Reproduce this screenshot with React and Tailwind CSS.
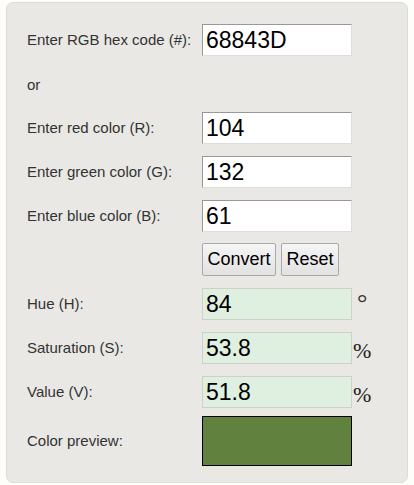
import React from 'react';

const font = { fontFamily: '"Liberation Sans", Arial, sans-serif' };

function Label({ children }) {
  return <div className="w-[175px] shrink-0 text-[15px] text-[#333]">{children}</div>;
}

function EntryRow({ label, value, className = '' }) {
  return (
    <div className={`flex items-center ${className}`}>
      <Label>{label}</Label>
      <div className="h-[32px] w-[150px] border border-t-[#999] border-l-[#999] border-r-[#ddd] border-b-[#ddd] bg-white pl-[3px] text-[23px] leading-[30px] text-black">
        {value}
      </div>
    </div>
  );
}

function ResultRow({ label, value, unit, degree, className = '' }) {
  return (
    <div className={`flex items-center ${className}`}>
      <Label>{label}</Label>
      <div className="h-[32px] w-[150px] border border-[#cfcfcb] bg-[#dff0e0] pl-[3px] text-[23px] leading-[30px] text-black">
        {value}
      </div>
      {degree ? (
        <span className="ml-[5px] self-start mt-[2px] font-['Liberation_Serif',serif] text-[26px] leading-none text-[#333]">°</span>
      ) : (
        <span className="ml-[1px] mt-[6px] font-['Liberation_Serif',serif] text-[22px] leading-none text-[#222]">{unit}</span>
      )}
    </div>
  );
}

export default function App() {
  return (
    <div className="min-h-screen bg-[#fdfdf9] px-[6px] pt-[2px]" style={font}>
      <div className="h-[481px] w-[402px] rounded-[7px] border border-[#dddcd8] bg-[#e9e8e5] pl-[20px] pt-[21px]">
        <EntryRow label="Enter RGB hex code (#):" value="68843D" />
        <div className="mt-[20px] h-[17px] text-[15px] leading-[17px] text-[#333]">or</div>
        <EntryRow className="mt-[19px]" label="Enter red color (R):" value="104" />
        <EntryRow className="mt-[12px]" label="Enter green color (G):" value="132" />
        <EntryRow className="mt-[12px]" label="Enter blue color (B):" value="61" />
        <div className="mt-[11px] flex gap-[5px] pl-[175px]">
          <button className="h-[33px] w-[74px] rounded-[2px] border border-[#a9a9a9] bg-gradient-to-b from-[#f5f5f5] to-[#e2e2e2] text-[18px] text-black">
            Convert
          </button>
          <button className="h-[33px] w-[58px] rounded-[2px] border border-[#a9a9a9] bg-gradient-to-b from-[#f5f5f5] to-[#e2e2e2] text-[18px] text-black">
            Reset
          </button>
        </div>
        <ResultRow className="mt-[12px]" label="Hue (H):" value="84" degree />
        <ResultRow className="mt-[12px]" label="Saturation (S):" value="53.8" unit="%" />
        <ResultRow className="mt-[12px]" label="Value (V):" value="51.8" unit="%" />
        <div className="mt-[8px] flex items-center">
          <Label>Color preview:</Label>
          <div className="h-[50px] w-[150px] border-[1.5px] border-black bg-[#61823f]" />
        </div>
      </div>
    </div>
  );
}
